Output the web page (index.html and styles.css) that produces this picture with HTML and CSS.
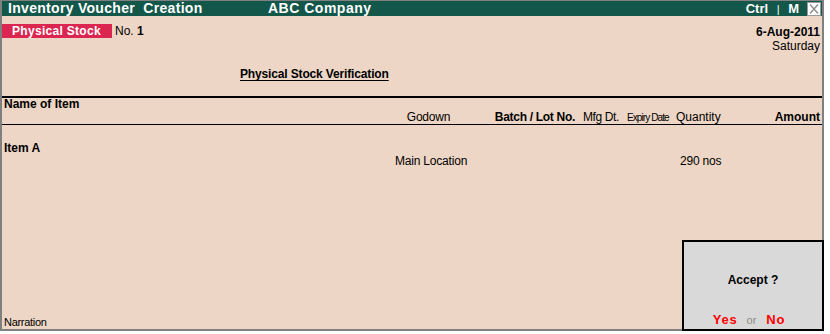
FILE: index.html
```html
<!DOCTYPE html>
<html>
<head>
<meta charset="utf-8">
<link rel="stylesheet" href="styles.css">
</head>
<body>
<div class="frame">
  <div class="titlebar">
    <span class="t-voucher">Inventory Voucher&nbsp; Creation</span>
    <span class="t-company">ABC Company</span>
    <span class="t-ctrl">Ctrl <span class="t-bar">|</span> M</span>
    <span class="t-close"><svg width="14" height="14" viewBox="0 0 14 14"><rect x="0.5" y="0.5" width="13" height="13" fill="#fff" stroke="#9a9a9a"/><path d="M3 2.5 L11 11.5 M11 2.5 L3 11.5" stroke="#8a8a8a" stroke-width="1.3"/></svg></span>
  </div>
  <div class="toprow">
    <div class="vtype">
      <span class="badge">Physical Stock</span>
      <span class="vno">No. <b>1</b></span>
    </div>
    <div class="dateblock">
      <div class="date">6-Aug-2011</div>
      <div class="day">Saturday</div>
    </div>
  </div>
  <div class="title"><span>Physical Stock Verification</span></div>
  <div class="rule-thick"></div>
  <div class="hdr-name">Name of Item</div>
  <div class="hdr-row">
    <span class="c-name"></span>
    <span class="c-godown">Godown</span>
    <span class="c-batch b">Batch / Lot No.</span>
    <span class="c-mfg">Mfg Dt.</span>
    <span class="c-exp">Expiry Date</span>
    <span class="c-qty">Quantity</span>
    <span class="c-amt b">Amount</span>
  </div>
  <div class="item-name">Item A</div>
  <div class="item-row">
    <span class="c-name"></span>
    <span class="c-godown left">Main Location</span>
    <span class="c-batch"></span>
    <span class="c-mfg"></span>
    <span class="c-exp"></span>
    <span class="c-qty qty">290 nos</span>
    <span class="c-amt"></span>
  </div>
  <div class="narration">Narration</div>
  <div class="accept">
    <div class="accept-q">Accept ?</div>
    <div class="accept-a"><span class="yn">Yes</span><span class="or">or</span><span class="yn">No</span></div>
  </div>
</div>
</body>
</html>
```
FILE: styles.css
```css
html, body {
  margin: 0;
  padding: 0;
  background: #ffffff;
}
body {
  font-family: "Liberation Sans", Arial, sans-serif;
  font-size: 12px;
  color: #000;
}
.frame {
  position: relative;
  width: 824px;
  height: 331px;
  box-sizing: border-box;
  border-style: solid;
  border-color: #808080;
  border-width: 1px 2px 2px 2px;
  background: #edd6c5;
  display: flex;
  flex-direction: column;
}
.titlebar {
  height: 15px;
  background: #13574a;
  color: #fff;
  font-weight: bold;
  font-size: 14px;
  line-height: 15px;
  display: flex;
  align-items: center;
  letter-spacing: 0.3px;
}
.t-voucher {
  margin-left: 6px;
  width: 260px;
  white-space: nowrap;
}
.t-company {
  letter-spacing: 0.5px;
}
.t-ctrl {
  margin-left: auto;
  font-size: 13px;
  letter-spacing: 0;
  white-space: nowrap;
}
.t-bar {
  font-weight: normal;
  font-size: 11px;
  padding: 0 5px;
}
.t-close {
  display: flex;
  margin-left: 8px;
  margin-right: 1px;
}
.toprow {
  margin-top: 8px;
  display: flex;
  justify-content: space-between;
  align-items: flex-start;
}
.vtype {
  display: flex;
  align-items: center;
  height: 14px;
}
.badge {
  width: 110px;
  height: 14px;
  line-height: 14px;
  box-sizing: border-box;
  padding-left: 10px;
  background: #db2652;
  color: #fff;
  font-weight: bold;
  font-size: 12px;
  letter-spacing: 0.3px;
}
.vno {
  margin-left: 3px;
  font-size: 12px;
}
.dateblock {
  text-align: right;
  padding-right: 2px;
}
.date {
  font-weight: bold;
  line-height: 15px;
  padding-top: 1px;
}
.day {
  line-height: 12px;
}
.title {
  margin-top: 15px;
  padding-left: 238px;
  line-height: 14px;
  font-weight: bold;
}
.title span {
  text-decoration: underline;
  text-underline-offset: 2px;
  letter-spacing: -0.15px;
}
.rule-thick {
  margin-top: 15px;
  height: 2px;
  background: #000;
}
.hdr-name {
  padding-left: 2px;
  line-height: 12px;
  font-weight: bold;
}
.hdr-row {
  display: flex;
  margin-top: 1px;
  line-height: 13px;
  border-bottom: 1px solid #000;
  white-space: nowrap;
}
.b { font-weight: bold; }
.c-name { width: 391px; }
.c-godown { width: 71px; text-align: center; letter-spacing: -0.2px; }
.c-godown.left { text-align: left; padding-left: 2px; box-sizing: border-box; }
.c-batch { width: 117px; text-align: right; padding-right: 6px; box-sizing: border-box; letter-spacing: -0.3px; }
.c-mfg { width: 44px; padding-left: 2px; box-sizing: border-box; letter-spacing: -0.4px; }
.c-exp { width: 49px; padding-left: 2px; box-sizing: border-box; font-size: 10px; letter-spacing: -0.9px; }
.c-qty { width: 60px; padding-left: 2px; box-sizing: border-box; }
.c-amt { flex: 1; text-align: right; padding-right: 2px; }
.item-name {
  margin-top: 17px;
  padding-left: 2px;
  line-height: 13px;
  font-weight: bold;
}
.item-row {
  display: flex;
  line-height: 13px;
  white-space: nowrap;
}
.qty {
  padding-left: 6px;
  letter-spacing: -0.2px;
}
.narration {
  margin-top: auto;
  padding-left: 2px;
  line-height: 13px;
  font-size: 11px;
  letter-spacing: -0.3px;
}
.accept {
  position: absolute;
  left: 680px;
  top: 239px;
  width: 142px;
  height: 91px;
  box-sizing: border-box;
  border: 2px solid #000;
  background: #d9d9d9;
  display: flex;
  flex-direction: column;
  align-items: center;
}
.accept-q {
  margin-top: 31px;
  font-weight: bold;
  line-height: 14px;
}
.accept-a {
  margin-top: auto;
  margin-bottom: 2px;
  margin-right: 8px;
  line-height: 14px;
  display: flex;
  align-items: baseline;
}
.yn {
  color: #ff0000;
  font-weight: bold;
  font-size: 13px;
  letter-spacing: 0.8px;
}
.or {
  color: #8a8a8a;
  font-size: 11px;
  padding: 0 10px 0 9px;
}
```
